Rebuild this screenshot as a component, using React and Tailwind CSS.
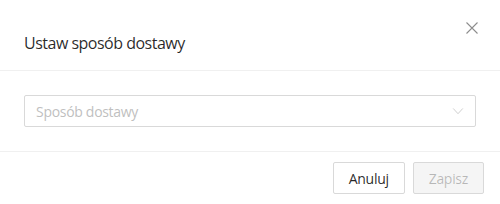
export default function App() {
    return (
        <div className="w-[500px] h-[204px] bg-white text-[14px] text-black/85 tracking-[-0.3px]" style={{ fontFamily: '"Segoe UI", "Open Sans", sans-serif' }}>
            <div className="relative px-6 pt-8 pb-4 border-b border-[#f0f0f0]">
                <h2 className="text-[16px] leading-[22px] text-black/85 tracking-[-0.5px]">Ustaw sposób dostawy</h2>
                <button className="absolute right-[22px] top-[22px] w-[12px] h-[12px] text-black/45">
                    <svg viewBox="0 0 12 12" className="w-[12px] h-[12px]" fill="none" stroke="currentColor" strokeWidth="1.1">
                        <path d="M0.5 0.5 L11.5 11.5 M11.5 0.5 L0.5 11.5" />
                    </svg>
                </button>
            </div>
            <div className="px-6 py-6 border-b border-[#f0f0f0]">
                <div className="h-8 flex items-center justify-between border border-[#d9d9d9] rounded-[2px] pl-[11px] pr-[11px]">
                    <span className="text-[#bfbfbf]">Sposób dostawy</span>
                    <svg viewBox="0 0 12 8" className="w-[12px] h-[7px] text-[#c8c8c8]" fill="none" stroke="currentColor" strokeWidth="1">
                        <path d="M0.5 0.5 L6 6.5 L11.5 0.5" />
                    </svg>
                </div>
            </div>
            <div className="flex justify-end gap-2 px-4 pt-[10px]">
                <button className="h-8 px-[15px] border border-[#d9d9d9] rounded-[2px] bg-white text-black/85">Anuluj</button>
                <button className="h-8 px-[15px] border border-[#d9d9d9] rounded-[2px] bg-[#f5f5f5] text-black/25">Zapisz</button>
            </div>
        </div>
    );
}
